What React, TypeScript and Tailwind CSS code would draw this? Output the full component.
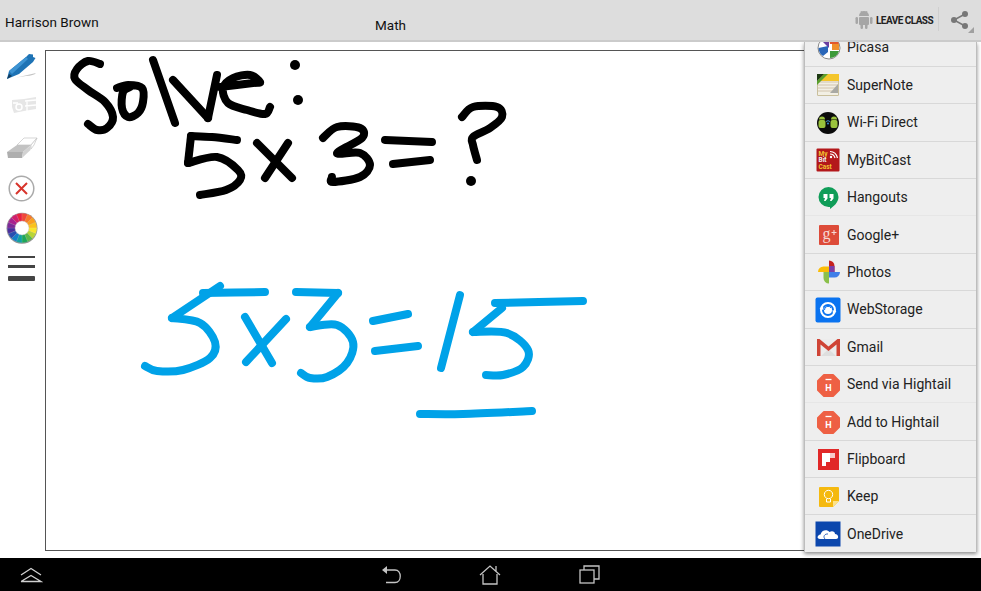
import type { ReactNode } from "react";

type Pt = [number, number];

// catmull-rom through the sampled pen points, so the ink looks hand drawn
function smooth(pts: Pt[]) {
  let d = `M${pts[0][0]} ${pts[0][1]}`;
  for (let i = 0; i < pts.length - 1; i++) {
    const p0 = pts[i - 1] ?? pts[i];
    const p1 = pts[i];
    const p2 = pts[i + 1];
    const p3 = pts[i + 2] ?? p2;
    const c1x = p1[0] + (p2[0] - p0[0]) / 6;
    const c1y = p1[1] + (p2[1] - p0[1]) / 6;
    const c2x = p2[0] - (p3[0] - p1[0]) / 6;
    const c2y = p2[1] - (p3[1] - p1[1]) / 6;
    d += ` C${c1x} ${c1y} ${c2x} ${c2y} ${p2[0]} ${p2[1]}`;
  }
  return d;
}

const blackInk: Pt[][] = [
  [[100, 64], [88, 61], [77, 69], [75, 79], [88, 90], [105, 102], [113, 117], [107, 128], [97, 130], [88, 124]],
  [[117, 88], [128, 85], [142, 88], [143, 102], [138, 113], [128, 117], [122, 108], [123, 92], [130, 87]],
  [[153, 60], [175, 123]],
  [[173, 80], [208, 118]],
  [[208, 118], [217, 75]],
  [[220, 87], [253, 83], [260, 82], [250, 75], [233, 78], [223, 88], [228, 103], [247, 110], [265, 114], [270, 107]],
  [[237, 140], [212, 137], [191, 136]],
  [[191, 136], [188, 163]],
  [[188, 163], [217, 157], [238, 170], [240, 180], [226, 190], [200, 195]],
  [[257, 143], [292, 178]],
  [[288, 143], [265, 178]],
  [[323, 138], [337, 127], [360, 128], [362, 138], [337, 153], [360, 153], [370, 165], [360, 177], [333, 182], [332, 177]],
  [[385, 140], [432, 142]],
  [[393, 164], [430, 160]],
  [[462, 117], [473, 107], [497, 107], [502, 117], [490, 128], [473, 137], [473, 145], [477, 160]],
];

const blueInk: Pt[][] = [
  [[203, 293], [265, 292]],
  [[220, 286], [172, 318]],
  [[172, 318], [200, 323], [215, 342], [210, 358], [183, 370], [157, 371], [145, 366]],
  [[245, 317], [272, 363]],
  [[286, 319], [246, 362]],
  [[296, 292], [338, 293]],
  [[338, 293], [310, 327]],
  [[310, 327], [337, 325], [353, 342], [347, 363], [327, 377], [310, 378], [301, 373]],
  [[373, 321], [408, 314]],
  [[375, 351], [418, 346]],
  [[460, 295], [441, 368]],
  [[495, 303], [583, 301]],
  [[502, 308], [473, 332]],
  [[473, 332], [507, 333], [528, 350], [523, 367], [503, 375], [486, 375]],
  [[420, 414], [463, 414], [532, 411]],
];

function Icon26({ children }: { children: ReactNode }) {
  return (
    <svg width="26" height="26" viewBox="0 0 26 26" className="shrink-0">
      {children}
    </svg>
  );
}

const Picasa = (
  <Icon26>
    <circle cx="14" cy="13" r="11" fill="#fff" stroke="#888" strokeWidth="1" />
    <path d="M14 13 L6 5 A11 11 0 0 1 14 2 Z" fill="#6a3fa0" />
    <path d="M14 2 A11 11 0 0 1 24 9 L15 9 Z" fill="#e2572b" />
    <path d="M13 11 L3.500 13 A10 10 0 0 0 8 21 L13 17 Z" fill="#2a66b8" />
    <path d="M15 16 H24 A10 10 0 0 1 15 23 Z" fill="#3c9a3a" />
    <path d="M17 9 H24 V15 H17 Z" fill="#ef8f2a" />
  </Icon26>
);

const SuperNote = (
  <Icon26>
    <rect x="2" y="2" width="22" height="22" rx="1.500" fill="#c9bf9c" />
    <rect x="3" y="7" width="20" height="16" fill="#f2efe4" />
    <path d="M3 10h20M3 13h20M3 16h20M3 19h20" stroke="#c9b9a0" strokeWidth="0.800" />
    <path d="M8 2 H24 V9 H3 Z" fill="#f4c62c" />
    <path d="M2 9 L9 2 H13 L2 13 Z" fill="#5aa02c" />
    <path d="M2 2 H9 L2 9 Z" fill="#1d3a12" />
    <path d="M15 21 L23 12 V21 Z" fill="#a9a9a4" />
  </Icon26>
);

const WifiDirect = (
  <Icon26>
    <circle cx="13" cy="13" r="11" fill="#0b0b0b" />
    <rect x="3.500" y="10" width="7" height="8" rx="2" fill="#9ac23c" />
    <path d="M4 9.500 A3 3 0 0 1 10 9.500 Z" fill="#9ac23c" />
    <rect x="15.500" y="10" width="7" height="8" rx="2" fill="#9ac23c" />
    <path d="M16 9.500 A3 3 0 0 1 22 9.500 Z" fill="#9ac23c" />
    <path d="M11 11.500 Q13 9.800 15 11.500" stroke="#3d8fd0" strokeWidth="1" fill="none" />
    <circle cx="13" cy="13.500" r="1" fill="#3d8fd0" />
  </Icon26>
);

const MyBitCast = (
  <Icon26>
    <rect x="1.500" y="1.500" width="23" height="23" rx="1" fill="#b3181b" />
    <g fontSize="6.500" fontWeight="700" fill="#f1c232">
      <text x="3.500" y="8.500">My</text>
      <text x="3.500" y="15" fill="#eee">Bit</text>
      <text x="3.500" y="21.500">Cast</text>
    </g>
    <path d="M15 7 Q19 7 20 11 M15 4.500 Q21 4.500 22.500 11" stroke="#fff" strokeWidth="1.200" fill="none" />
    <circle cx="16" cy="10" r="1.200" fill="#fff" />
  </Icon26>
);

const Hangouts = (
  <Icon26>
    <path d="M13.500 2 A10 10 0 0 1 23.500 12 C23.500 17.500 18.500 21.500 15 24 V22 H13.500 A10 10 0 0 1 13.500 2 Z" fill="#0f9d58" />
    <path d="M8.500 9h4v4.500l-2 2.500h-1.500l1-3H8.500z M14.500 9h4v4.500l-2 2.500h-1.500l1-3H14.500z" fill="#fff" />
  </Icon26>
);

const GooglePlus = (
  <Icon26>
    <rect x="4" y="3" width="20" height="20" rx="1" fill="#dd4b39" />
    <text x="7.500" y="17" fontSize="16" fill="#f6d8d3" fontFamily="'Liberation Serif', serif">g</text>
    <path d="M16.500 10.500h5M19 8v5" stroke="#f6d8d3" strokeWidth="1.100" />
  </Icon26>
);

const Photos = (
  <Icon26>
    <path d="M14 13 H3 A5.500 5.500 0 0 1 8.500 7.500 H14 Z" fill="#fbbc05" />
    <path d="M14 13 V1.500 A5.500 5.500 0 0 1 19.500 7 V13 Z" fill="#c5221f" />
    <path d="M14 7 V13 H19.500 V7 Z" fill="#7b3fa8" />
    <path d="M14 13 H25 A5.500 5.500 0 0 1 19.500 18.500 H14 Z" fill="#3f7ee8" />
    <path d="M14 13 V24.500 A5.500 5.500 0 0 1 8.500 19 V13 Z" fill="#8bc04a" />
  </Icon26>
);

const WebStorage = (
  <Icon26>
    <rect x="0.500" y="0.500" width="25" height="25" rx="2" fill="#0a73f0" />
    <circle cx="13" cy="13" r="7" fill="none" stroke="#fff" strokeWidth="2" />
    <circle cx="13" cy="13" r="4" fill="#fff" />
    <path d="M9.500 13 A3.500 3.500 0 0 1 16 11" fill="none" stroke="#0a73f0" strokeWidth="1" />
    <path d="M4.500 11.500 L8 9 L8.500 13 Z M21.500 14.500 L18 17 L17.500 13 Z" fill="#fff" />
  </Icon26>
);

const Gmail = (
  <Icon26>
    <path d="M3 5 H24 V22 H3 Z" fill="#ececec" />
    <path d="M6 22 L13.500 15 L21 22 Z" fill="#dedede" />
    <path d="M2 22 V5 H4.500 L13.500 12.500 L22.500 5 H25 V22 H21.500 V10.500 L13.500 17 L5.500 10.500 V22 Z" fill="#cf4436" />
  </Icon26>
);

const Hightail = (
  <Icon26>
    <path d="M9 3 H18 L24 9 V18 L18 24 H9 L3 18 V9 Z" fill="#ee6044" stroke="#ee6044" strokeLinejoin="round" strokeWidth="2" />
    <path d="M10.500 7.500 H16.500" stroke="#fff" strokeWidth="1.300" />
    <text x="13.500" y="18.500" fontSize="9" fontWeight="700" fill="#fff" textAnchor="middle">H</text>
  </Icon26>
);

const Flipboard = (
  <Icon26>
    <rect x="3" y="3" width="21" height="21" fill="#e12828" />
    <path d="M7 7 H20 V12 H15 V16 H11 V20 H7 Z" fill="#fff" />
    <path d="M15 12 H20 V7 H15 Z" fill="#f6c9c9" />
  </Icon26>
);

const Keep = (
  <Icon26>
    <path d="M4 4 a1 1 0 0 1 1 -1 H23 a1 1 0 0 1 1 1 V17 L18 23 H5 a1 1 0 0 1 -1 -1 Z" fill="#f5b90f" />
    <path d="M18 23 V17 H24 Z" fill="#fbe28c" />
    <circle cx="13.500" cy="10.500" r="4.200" fill="none" stroke="#fff" strokeWidth="1" />
    <path d="M11.500 15 V18 H15.500 V15" fill="none" stroke="#fff" strokeWidth="1" />
  </Icon26>
);

const OneDrive = (
  <Icon26>
    <rect x="0.500" y="0.500" width="25" height="25" fill="#0c47ad" />
    <path d="M5 18 C1.500 18 2 14 5.500 13.500 C6.500 9 12 8 14.500 11 C17 9.500 20 10.500 20 13 C23.500 13 24.500 18 21 18 Z" fill="#fff" />
    <path d="M10 18 C7.500 15.500 10 12.500 13 13" fill="none" stroke="#0c47ad" strokeWidth="0.800" />
  </Icon26>
);

const shareTargets: { name: string; icon: ReactNode; faint?: boolean }[] = [
  { name: "Picasa", icon: Picasa },
  { name: "SuperNote", icon: SuperNote },
  { name: "Wi-Fi Direct", icon: WifiDirect },
  { name: "MyBitCast", icon: MyBitCast },
  { name: "Hangouts", icon: Hangouts },
  { name: "Google+", icon: GooglePlus, faint: true },
  { name: "Photos", icon: Photos },
  { name: "WebStorage", icon: WebStorage },
  { name: "Gmail", icon: Gmail },
  { name: "Send via Hightail", icon: Hightail },
  { name: "Add to Hightail", icon: Hightail, faint: true },
  { name: "Flipboard", icon: Flipboard },
  { name: "Keep", icon: Keep },
  { name: "OneDrive", icon: OneDrive },
];

function ColorWheel() {
  const colors = ["#e8213f", "#f0483a", "#f7792b", "#fb9f1f", "#fbc31c", "#f7e62d", "#b9d635", "#5cb947", "#1ea65a", "#12a0a0", "#1580c8", "#2a4fb0", "#4a2f9d", "#7b2a98", "#a8228f", "#d11f6c"];
  return (
    <svg width="32" height="32" viewBox="-16 -16 32 32">
      <circle r="15.500" cy="0.300" fill="#8f8f8f" />
      {colors.map((c, i) => {
        const a0 = ((i - 1) / 16) * Math.PI * 2 - Math.PI / 2;
        const a1 = (i / 16) * Math.PI * 2 - Math.PI / 2;
        return (
          <path
            key={c}
            d={`M${Math.cos(a0) * 14.8} ${Math.sin(a0) * 14.8} A14.800 14.800 0 0 1 ${Math.cos(a1) * 14.8} ${Math.sin(a1) * 14.8} L0 0 Z`}
            fill={c}
            stroke="#ffffff"
            strokeOpacity="0.25"
            strokeWidth="0.400"
          />
        );
      })}
      <circle r="7" fill="#fff" stroke="#bbb" strokeWidth="0.400" />
    </svg>
  );
}

function Toolbar() {
  return (
    <aside className="w-[45px] shrink-0 flex flex-col items-start pl-[6px] pt-[11px]">
      {/* pen */}
      <svg width="32" height="29" viewBox="0 0 32 29" className="shrink-0">
        <path d="M2 26.500 L30 20 Q28 22.500 20 23 Q10 24 2 26.500 Z" fill="#c4c4c4" />
        <path d="M1 26 L3 18 L20 4 L23 1 L27 1.500 L27 4 L29.500 5 L27 9 L13 21 Z" fill="#1e73b5" />
        <path d="M3 18 L20 4 L22 6 L6 21 Z" fill="#3d93d2" />
        <path d="M1 26 L3 21 L6 23 Z" fill="#123c5e" />
      </svg>
      {/* text stamp, greyed out */}
      <svg width="26" height="18" viewBox="0 0 26 18" className="shrink-0 mt-[15px] ml-[6px]">
        <path d="M0 3 L12 2 L24 0 V12 L12 14 L2 16 L0 10 Z" fill="#e6e6e6" />
        <path d="M13 4 L24 3 M13 9 L24 8 M1 6 H6 M15 4 V14" stroke="#fff" strokeWidth="1.300" fill="none" />
        <circle cx="7" cy="10" r="3" fill="none" stroke="#fff" strokeWidth="1.500" />
      </svg>
      {/* eraser */}
      <svg width="31" height="22" viewBox="0 0 31 22" className="shrink-0 mt-[22px] ml-[1px]">
        <path d="M10 8 L17 1 H30 L24 8 Z" fill="#fff" stroke="#c4c4c4" strokeWidth="0.700" />
        <path d="M24 8 L30 1 L27 8 L24 12 Z" fill="#fff" stroke="#c4c4c4" strokeWidth="0.700" />
        <path d="M0 15 L10 8 H24 L16 15 Z" fill="#c2c2c2" />
        <path d="M0 15 H16 L15 21 H1 Z" fill="#aeaeae" />
        <path d="M16 15 L24 8 L23.500 13 L15 21 Z" fill="#d2d2d2" />
      </svg>
      {/* clear */}
      <svg width="27" height="27" viewBox="0 0 27 27" className="shrink-0 mt-[16px] ml-[2px]">
        <circle cx="13.500" cy="13.500" r="12.300" fill="#fff" stroke="#aaa" strokeWidth="1.500" />
        <path d="M8 8 L19 19 M19 8 L8 19" stroke="#d8352c" strokeWidth="2" />
      </svg>
      <div className="mt-[10px]">
        <ColorWheel />
      </div>
      {/* menu lines, each thicker than the last */}
      <div className="flex flex-col w-[27px] ml-[2px] mt-[12px]">
        <div className="h-[2px] bg-[#444]" />
        <div className="h-[3px] bg-[#444] mt-[7px]" />
        <div className="h-[5px] bg-[#444] mt-[8px] rounded-[1px]" />
      </div>
    </aside>
  );
}

function Board() {
  return (
    <div className="flex-1 mt-[8px] mb-[7px] mr-[6px] border border-[#555] bg-white overflow-hidden">
      <svg width="928" height="499" viewBox="46 51 928 499" className="block" fill="none" strokeLinecap="round" strokeLinejoin="round">
        <g stroke="#000" strokeWidth="8">
          {blackInk.map((s, i) => (
            <path key={i} d={smooth(s)} />
          ))}
        </g>
        <g fill="#000">
          <circle cx="295" cy="65" r="5" />
          <circle cx="298" cy="100" r="5" />
          <circle cx="471" cy="181" r="5" />
        </g>
        <g stroke="#00a2e8" strokeWidth="8">
          {blueInk.map((s, i) => (
            <path key={i} d={smooth(s)} />
          ))}
        </g>
      </svg>
    </div>
  );
}

function ShareMenu() {
  return (
    <div className="absolute left-[804px] top-[42px] w-[173px] h-[510px] overflow-hidden bg-[#eeeeee] border-x border-[#bdbdbd] shadow-[0_2px_4px_rgba(0,0,0,0.45)]">
      <ul className="-mt-[13.6px]">
        {shareTargets.map((t, i) => (
          <li
            key={t.name}
            className={`h-[37.4px] pt-[1px] flex items-center pl-[10px] gap-[6px] text-[14px] text-[#222] ${
              i === 0 ? "" : t.faint ? "border-t border-[#e6e6e6]" : "border-t border-[#d8d8d8]"
            }`}
          >
            {t.icon}
            <span>{t.name}</span>
          </li>
        ))}
      </ul>
    </div>
  );
}

function TopBar() {
  return (
    <header className="relative z-10 h-[42px] shrink-0 bg-[#dddddd] border-b-2 border-[#cbcbcb] flex items-start text-[13.500px] text-[#111]">
      <span className="ml-[5px] mt-[11.500px] w-[370px] tracking-[0.05px]">Harrison Brown</span>
      <span className="mt-[15px]">Math</span>
      <div className="ml-auto flex items-center h-full">
        <svg width="18" height="19" viewBox="0 0 18 19" fill="#a6a6a6" className="mb-[2px]">
          <path d="M4 6 A5 5 0 0 1 14 6 Z" />
          <path d="M6 1 L7 3 M12 1 L11 3" stroke="#a6a6a6" />
          <rect x="4" y="7" width="10" height="8" rx="1" />
          <rect x="0.500" y="7" width="2.500" height="7" rx="1.200" />
          <rect x="15" y="7" width="2.500" height="7" rx="1.200" />
          <rect x="5.500" y="14" width="2.500" height="5" rx="1.200" />
          <rect x="10" y="14" width="2.500" height="5" rx="1.200" />
        </svg>
        <span className="ml-[3px] w-[59px] text-[10px] font-bold tracking-[-0.55px] text-[#222] whitespace-nowrap">LEAVE CLASS</span>
        <div className="ml-[3px] w-px h-[24px] mb-[2px] bg-[#cfcfcf]" />
        <div className="relative w-[42px] h-full">
          <svg width="20" height="20" viewBox="0 0 20 20" className="absolute left-[11px] top-[10px]" fill="#777">
            <path d="M15 4 L4 10 L15 16" fill="none" stroke="#777" strokeWidth="1.500" />
            <circle cx="15" cy="4" r="3" />
            <circle cx="4" cy="10" r="3" />
            <circle cx="15" cy="16" r="3" />
          </svg>
          <div className="absolute right-[7px] bottom-[7px] w-0 h-0 border-l-[6px] border-l-transparent border-b-[6px] border-b-[#a0a0a0]" />
        </div>
      </div>
    </header>
  );
}

function NavBar() {
  return (
    <nav className="h-[33px] shrink-0 bg-black flex items-center pl-[19px]">
      <svg width="24" height="16" viewBox="0 0 24 16" fill="none" stroke="#d0d0d0" strokeWidth="1.300">
        <path d="M2 8 L12 1.500 L22 8 M2 14.500 L12 8.500 L22 14.500 H2" />
      </svg>
      <svg width="21" height="19" viewBox="0 0 21 19" fill="none" stroke="#c4c4c4" strokeWidth="1.300" className="ml-[338px]">
        <path d="M5 5 H14 C21 5 21 17.500 14 17.500 H5" />
        <path d="M6 1 L1 5 L6 9 Z" fill="#c4c4c4" stroke="none" />
      </svg>
      <svg width="22" height="20" viewBox="0 0 22 20" fill="none" stroke="#c4c4c4" strokeWidth="1.300" className="ml-[77px]">
        <path d="M1 10 L11 1 L21 10 M4 9 V19 H18 V9 M17 6 V1" />
      </svg>
      <svg width="21" height="19" viewBox="0 0 21 19" fill="none" stroke="#c4c4c4" strokeWidth="1.300" className="ml-[78px]">
        <rect x="1" y="5" width="14" height="13" />
        <path d="M5 5 V1 H20 V14 H15" />
      </svg>
    </nav>
  );
}

export default function App() {
  return (
    <div className="relative w-[981px] h-[591px] overflow-hidden flex flex-col bg-white font-['Roboto',sans-serif]">
      <TopBar />
      <main className="flex-1 flex min-h-0">
        <Toolbar />
        <Board />
      </main>
      <ShareMenu />
      <NavBar />
    </div>
  );
}
